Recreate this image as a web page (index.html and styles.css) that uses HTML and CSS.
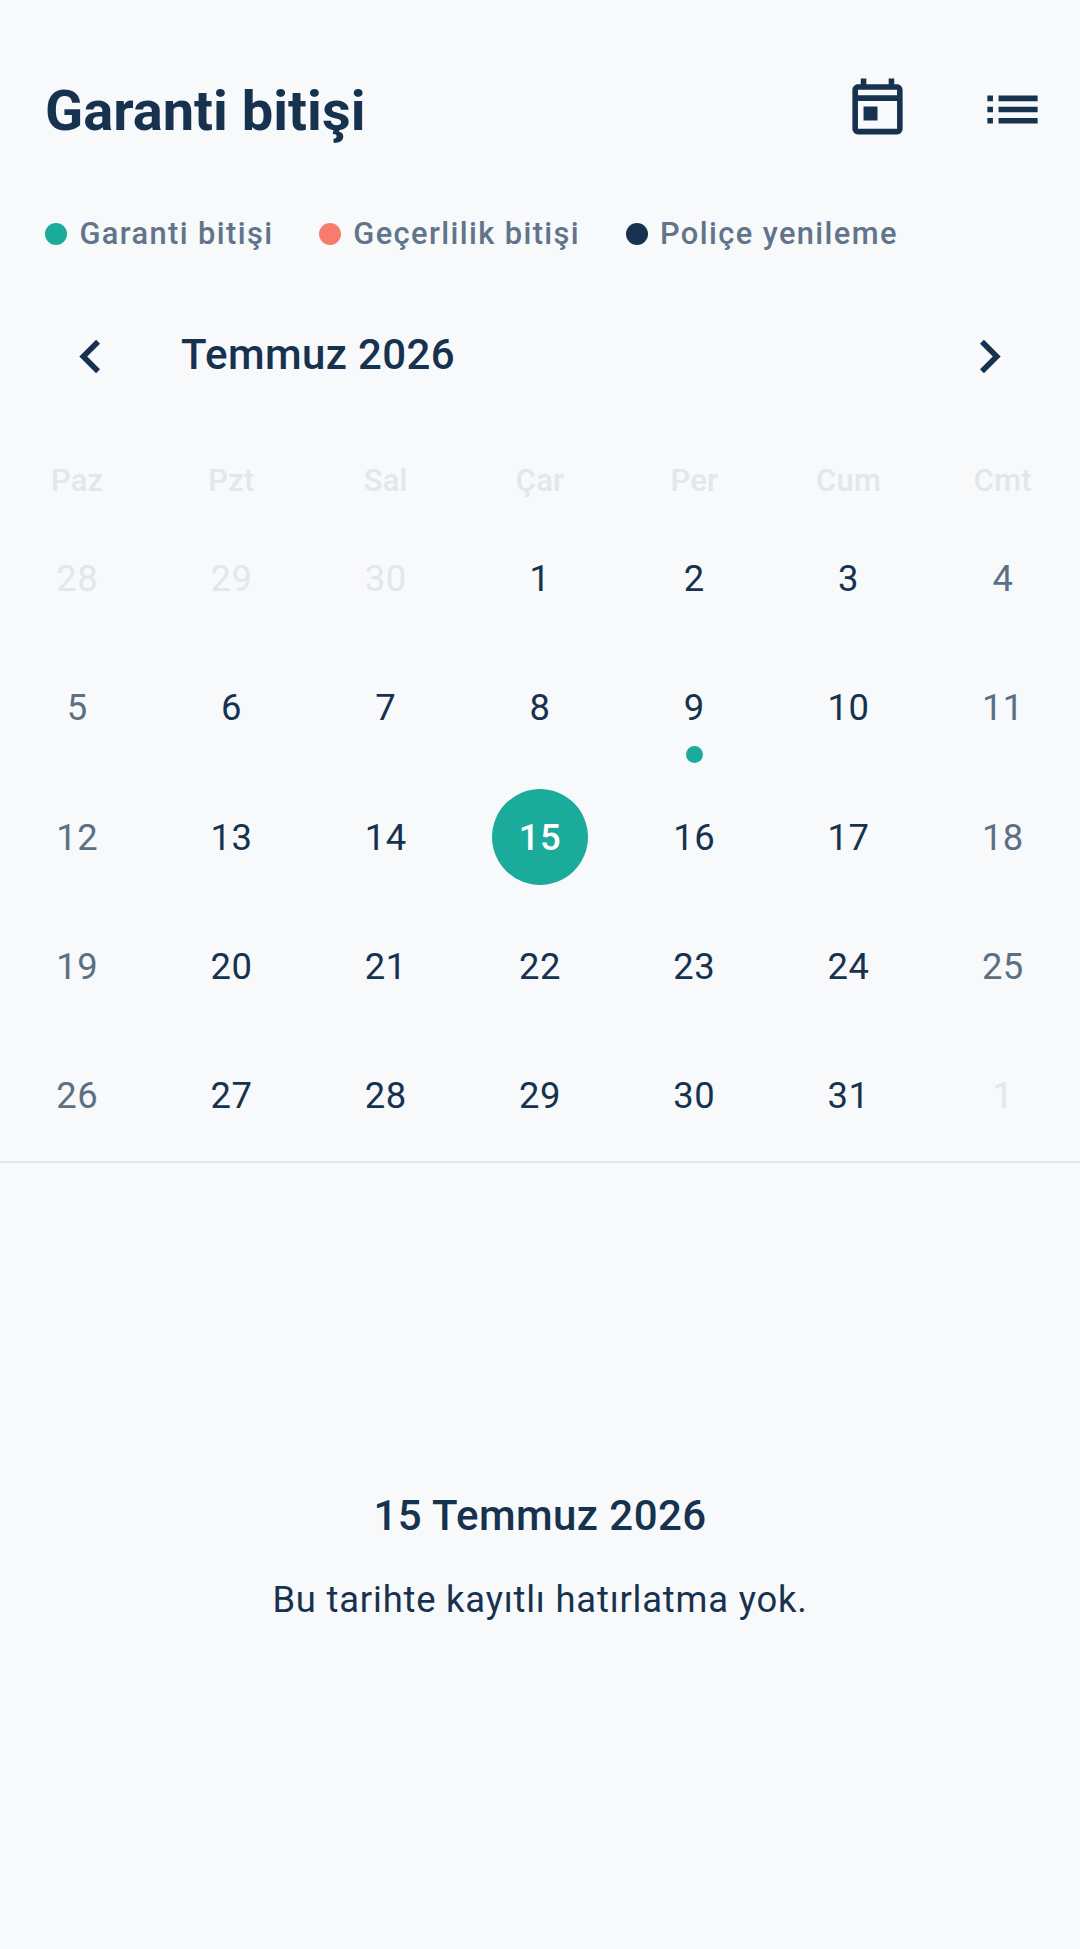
FILE: index.html
```html
<!DOCTYPE html>
<html lang="tr">
<head>
    <meta charset="UTF-8">
    <meta name="viewport" content="width=device-width, initial-scale=1.0">
    <title>Garanti bitişi</title>
    <link rel="stylesheet" href="styles.css">
</head>
<body>

    <div class="page">
        <div class="top-bar">
            <div class="page-title">Garanti bitişi</div>
            <div class="top-icons">
                <svg class="icon calendar-icon" viewBox="0 0 24 24"><path d="M19 4h-1V2h-2v2H8V2H6v2H5c-1.1 0-2 .9-2 2v14c0 1.1.9 2 2 2h14c1.1 0 2-.9 2-2V6c0-1.1-.9-2-2-2zm0 16H5V10h14v10zm0-12H5V6h14v2zM7 12h5v5H7z"/></svg>
                <svg class="icon" viewBox="0 0 24 24"><path d="M3 13h2v-2H3v2zm0 4h2v-2H3v2zm0-8h2V7H3v2zm4 4h14v-2H7v2zm0 4h14v-2H7v2zM7 7v2h14V7H7z"/></svg>
            </div>
        </div>

        <div class="legend">
            <div class="legend-item"><span class="legend-dot teal"></span>Garanti bitişi</div>
            <div class="legend-item"><span class="legend-dot coral"></span>Geçerlilik bitişi</div>
            <div class="legend-item"><span class="legend-dot navy"></span>Poliçe yenileme</div>
        </div>

        <div class="month-bar">
            <svg class="icon chevron" viewBox="0 0 24 24"><path d="M15.41 7.41L14 6l-6 6 6 6 1.41-1.41L10.83 12z"/></svg>
            <div class="month-name">Temmuz 2026</div>
            <svg class="icon chevron" viewBox="0 0 24 24"><path d="M10 6L8.59 7.41 13.17 12l-4.58 4.59L10 18l6-6z"/></svg>
        </div>

        <div class="weekdays">
            <div>Paz</div><div>Pzt</div><div>Sal</div><div>Çar</div><div>Per</div><div>Cum</div><div>Cmt</div>
        </div>

        <div class="days">
            <div class="day muted">28</div><div class="day muted">29</div><div class="day muted">30</div><div class="day">1</div><div class="day">2</div><div class="day">3</div><div class="day weekend">4</div>
            <div class="day weekend">5</div><div class="day">6</div><div class="day">7</div><div class="day">8</div><div class="day">9<span class="event-dot"></span></div><div class="day">10</div><div class="day weekend">11</div>
            <div class="day weekend">12</div><div class="day">13</div><div class="day">14</div><div class="day"><span class="selected">15</span></div><div class="day">16</div><div class="day">17</div><div class="day weekend">18</div>
            <div class="day weekend">19</div><div class="day">20</div><div class="day">21</div><div class="day">22</div><div class="day">23</div><div class="day">24</div><div class="day weekend">25</div>
            <div class="day weekend">26</div><div class="day">27</div><div class="day">28</div><div class="day">29</div><div class="day">30</div><div class="day">31</div><div class="day muted">1</div>
        </div>

        <div class="empty-state">
            <div class="empty-date">15 Temmuz 2026</div>
            <div class="empty-text">Bu tarihte kayıtlı hatırlatma yok.</div>
        </div>
    </div>

</body>
</html>
```

FILE: styles.css
```css
body {
    margin: 0;
    background-color: #f7f9fb;
    color: #16324f;
    font-family: Roboto, sans-serif;
}

.page {
    height: 1949px;
    overflow: hidden;
}

.icon {
    display: block;
    width: 67px;
    height: 67px;
    fill: #16324f;
}

.top-bar {
    display: flex;
    align-items: flex-start;
    justify-content: space-between;
    padding: 76px 34px 0 45px;
}

.page-title {
    padding-top: 2px;
    font-size: 56px;
    font-weight: 700;
    line-height: 66px;
}

.top-icons {
    display: flex;
    gap: 68px;
}

.calendar-icon {
    margin-top: -3px;
}

.legend {
    display: flex;
    gap: 45.5px;
    padding: 68px 45px 0;
}

.legend-item {
    display: flex;
    align-items: center;
    gap: 12px;
    font-size: 30.8px;
    font-weight: 500;
    line-height: 44px;
    letter-spacing: 1.4px;
    color: #62748a;
}

.legend-dot {
    width: 22.4px;
    height: 22.4px;
    border-radius: 50%;
}

.teal { background-color: #1aab9b; }
.coral { background-color: #f67d6e; }
.navy { background-color: #16324f; }

.month-bar {
    display: flex;
    align-items: center;
    padding: 65px 57px 0;
}

.chevron {
    position: relative;
    top: 1.5px;
}

.month-name {
    flex: 1;
    padding-left: 57px;
    font-size: 42px;
    font-weight: 500;
    line-height: 66px;
    letter-spacing: 0.4px;
}

.weekdays, .days {
    display: grid;
    grid-template-columns: repeat(7, 1fr);
    text-align: center;
}

.weekdays {
    padding-top: 71px;
    font-size: 30.8px;
    font-weight: 500;
    line-height: 44px;
    letter-spacing: 0.3px;
    color: #e0e7ed;
}

.days {
    grid-auto-rows: 129.3px;
    padding-top: 11px;
    padding-bottom: 1px;
    border-bottom: 2px solid #e3e6e9;
}

.day {
    position: relative;
    display: flex;
    align-items: center;
    justify-content: center;
    font-size: 36.4px;
    letter-spacing: 0.5px;
}

.muted { color: #e0e7ed; }
.weekend { color: #5b7083; }

.selected {
    display: flex;
    align-items: center;
    justify-content: center;
    width: 96px;
    height: 96px;
    border-radius: 50%;
    background-color: #1aab9b;
    color: #fff;
    font-weight: 500;
}

.event-dot {
    position: absolute;
    left: 50%;
    bottom: 9.5px;
    width: 17px;
    height: 17px;
    margin-left: -8.5px;
    border-radius: 50%;
    background-color: #1aab9b;
}

.empty-state {
    padding-top: 325px;
    text-align: center;
}

.empty-date {
    font-size: 42px;
    font-weight: 500;
    line-height: 56px;
    letter-spacing: 0.45px;
}

.empty-text {
    padding-top: 28px;
    font-size: 36.4px;
    line-height: 56px;
    letter-spacing: 0.8px;
}
```
